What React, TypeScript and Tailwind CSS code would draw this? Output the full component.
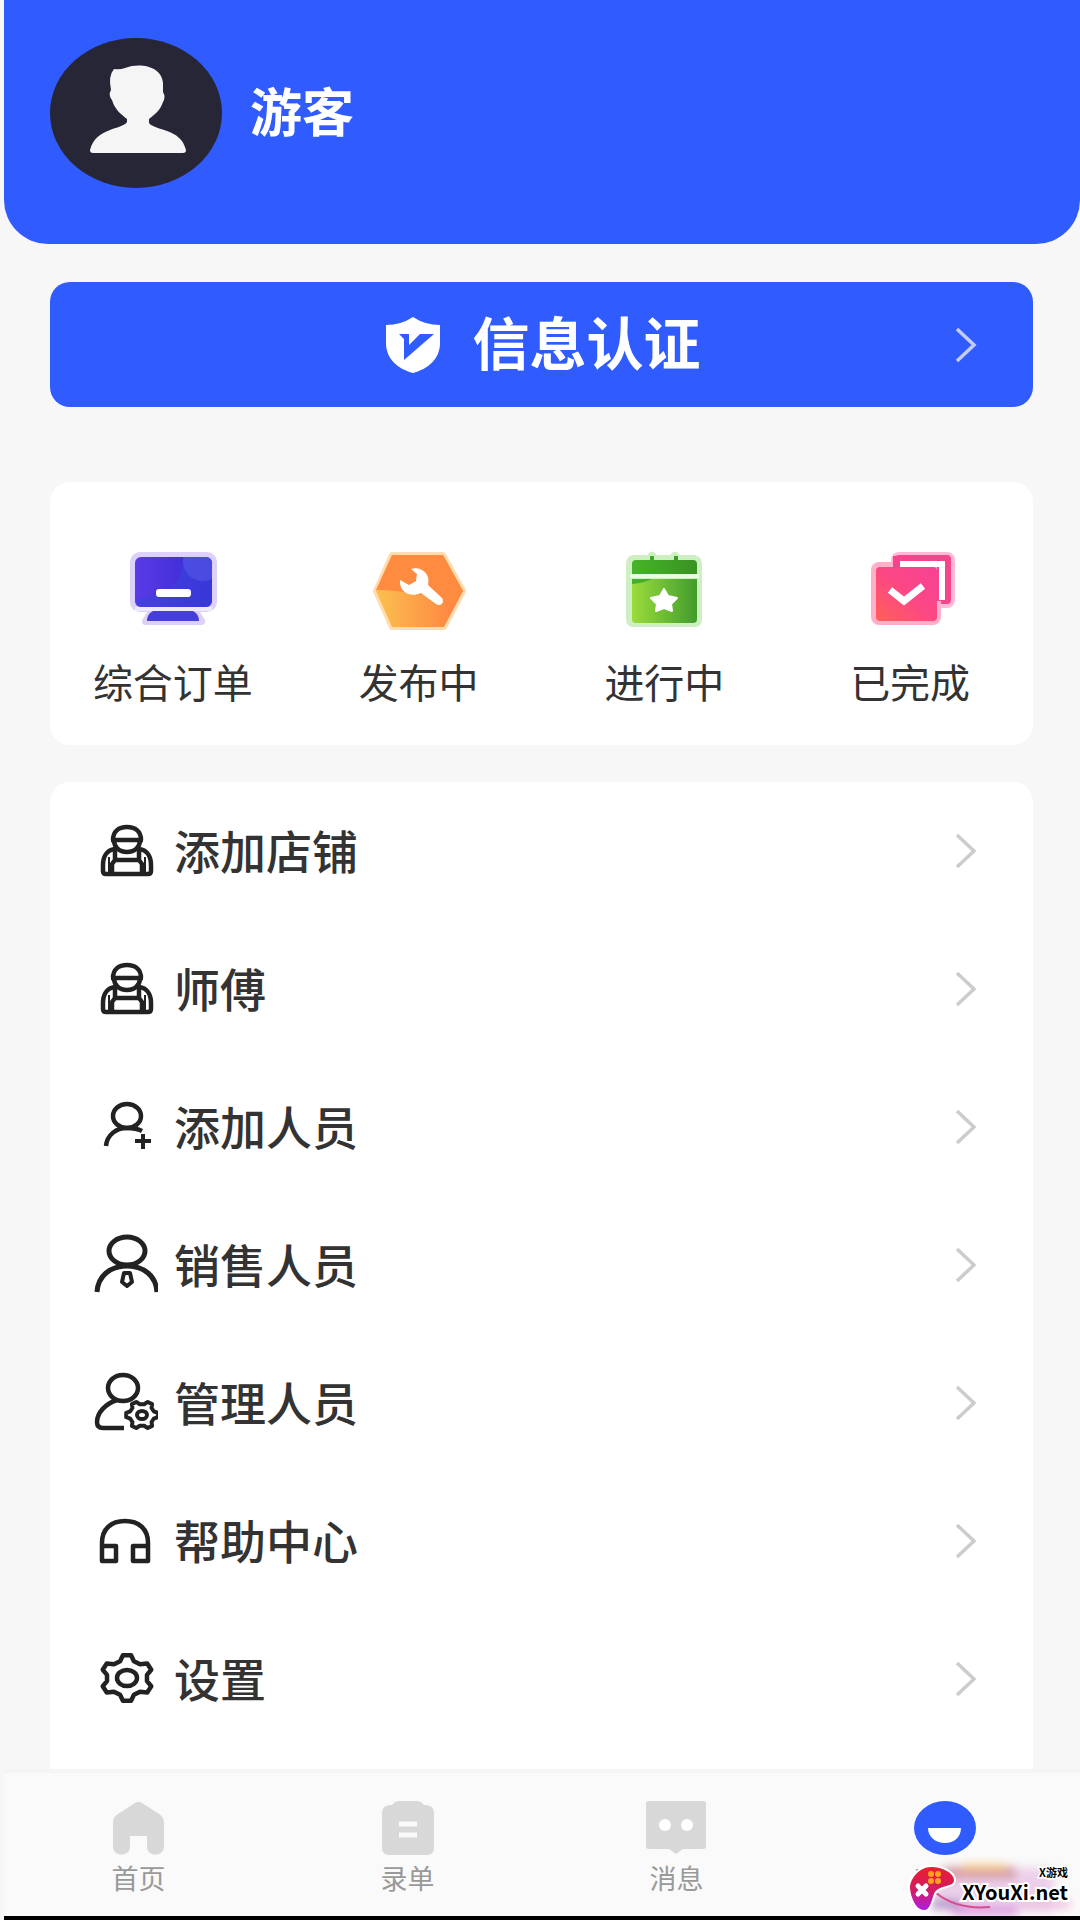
import type { ReactNode } from "react";

const BLUE = "#2f5bff";

// outline of a six-toothed cog, built round an ellipse
function cogPath(cx: number, cy: number, rx: number, ry: number, turn = 0) {
  const points: string[] = [];
  for (let i = 0; i < 6; i++) {
    const mid = turn + i * 60 - 90;
    for (const [offset, r] of [[-20, 0.78], [-9, 1], [9, 1], [20, 0.78]]) {
      const a = ((mid + offset) * Math.PI) / 180;
      points.push(`${(cx + Math.cos(a) * rx * r).toFixed(2)} ${(cy + Math.sin(a) * ry * r).toFixed(2)}`);
    }
  }
  return `M${points.join("L")}Z`;
}

function LineIcon({ children }: { children: ReactNode }) {
  return (
    <svg
      viewBox="0 0 64 64"
      className="size-16 shrink-0"
      fill="none"
      stroke="#222"
      strokeWidth="4.5"
      strokeLinejoin="round"
      aria-hidden="true"
    >
      {children}
    </svg>
  );
}

function WorkerIcon() {
  return (
    <LineIcon>
      <path d="M19 21C19 12 25 8 33 8s14 4 14 13M17 21h32M20 21c0 7 5 12 13 12s13-5 13-12" />
      <path d="M21 30C12 31 9 39 9 46v6c0 2 1 3 3 3h42c2 0 3-1 3-3v-6c0-7-3-15-12-16" />
      <path d="M21 29v12h24V29M21 41l-3 4v10M45 41l3 4v10" />
      <path d="M15 38v15M51 38v15" strokeWidth="2" />
    </LineIcon>
  );
}

function AddUserIcon() {
  return (
    <LineIcon>
      <ellipse cx="33" cy="21" rx="14" ry="12" />
      <path d="M12 51C13 40 22 33 33 33c6 0 11 1 15 3" />
      <path d="M49 39v15M41 46h16" strokeWidth="4" />
    </LineIcon>
  );
}

function SalesIcon() {
  return (
    <LineIcon>
      <g strokeWidth="5">
        <ellipse cx="33" cy="18" rx="18" ry="14" />
        <path d="M3 59C4 43 16 33 33 33s29 10 30 26" />
      </g>
      <path d="M30 40h6l2 9-5 4-5-4z" strokeWidth="4" />
    </LineIcon>
  );
}

function ManagerIcon() {
  return (
    <LineIcon>
      <ellipse cx="29" cy="17" rx="15" ry="13" />
      <path d="M23 29C11 33 3 42 3 51c0 4 2 6 6 6h21" />
      <path d={cogPath(48, 44, 16, 14, 30)} strokeWidth="4" />
      <ellipse cx="48" cy="44" rx="5" ry="4" strokeWidth="4" />
    </LineIcon>
  );
}

function HeadsetIcon() {
  return (
    <LineIcon>
      <path d="M8 52V34C8 20 17 12 31 12s23 8 23 22v18M8 37h14v15H8zM39 37h15v15H39z" />
    </LineIcon>
  );
}

function SettingsIcon() {
  return (
    <LineIcon>
      <path d={cogPath(33, 31, 26, 23)} />
      <ellipse cx="33" cy="31" rx="10" ry="8" />
    </LineIcon>
  );
}

function Chevron({ color }: { color: string }) {
  return (
    <svg viewBox="0 0 22 38" className="h-[38px] w-[22px] shrink-0" fill="none" stroke={color} strokeWidth="3.5" aria-hidden="true">
      <path d="M2 3l17 16L2 35" />
    </svg>
  );
}

function MonitorIcon() {
  return (
    <svg viewBox="0 0 96 84" className="h-[84px] w-24" aria-hidden="true">
      <defs>
        <linearGradient id="monitor" x1="0" x2="1">
          <stop offset="0" stopColor="#5a3be6" />
          <stop offset="1" stopColor="#3328d2" />
        </linearGradient>
        <clipPath id="screen">
          <rect x="10" y="10" width="77" height="50" rx="6" />
        </clipPath>
      </defs>
      <g fill="#ddd0fa">
        <rect x="5" y="5" width="87" height="60" rx="10" />
        <path d="M26 60h46l8 13q1 5-4 5H21q-5 0-4-5z" />
      </g>
      <rect x="10" y="10" width="77" height="50" rx="6" fill="url(#monitor)" />
      <g clipPath="url(#screen)">
        <path d="M58 8c0 22-8 32-18 39L10 52v10h80V8z" fill="#3a45dc" opacity=".55" />
        <circle cx="78" cy="14" r="20" fill="#5558e6" opacity=".6" />
      </g>
      <path d="M28 64h40q6 3 6 10H22q0-7 6-10z" fill="#453edb" />
      <path d="M10 62h77" stroke="#efe9fd" strokeWidth="4" />
      <rect x="31" y="42" width="35" height="8" rx="3" fill="#fff" />
    </svg>
  );
}

function WrenchIcon() {
  return (
    <svg viewBox="0 0 96 84" className="h-[84px] w-24" aria-hidden="true">
      <defs>
        <linearGradient id="hexLow" x1="0" x2="1">
          <stop offset="0" stopColor="#fbc04f" />
          <stop offset="1" stopColor="#ff7f40" />
        </linearGradient>
      </defs>
      <path d="M5 44L21 8h51l20 36-19 36H21z" fill="#ffdcae" stroke="#ffdcae" strokeWidth="6" strokeLinejoin="round" />
      <path d="M5 44L21 8h51l20 36-19 36H21z" fill="url(#hexLow)" />
      <path d="M5 43L21 8h51l20 36-9 14q-14-16-34-10-22-5-44-5z" fill="#ff8b40" />
      <path d="M29 33l9 5 7-4 1-7-6-5c10-3 20 5 17 16l14 13c3 5-2 9-6 6L50 46C39 51 28 45 29 33z" fill="#fff" />
    </svg>
  );
}

function CalendarIcon() {
  return (
    <svg viewBox="0 0 96 84" className="h-[84px] w-24" aria-hidden="true">
      <defs>
        <linearGradient id="calTop" x1="0" x2="1">
          <stop offset="0" stopColor="#45b527" />
          <stop offset="1" stopColor="#399223" />
        </linearGradient>
        <linearGradient id="calBody" x1="0" x2="1">
          <stop offset="0" stopColor="#9bdc3d" />
          <stop offset="1" stopColor="#419c2c" />
        </linearGradient>
      </defs>
      <path d="M17 8h14q5-7 10 0h13q5-7 10 0h14q8 1 8 9v55q0 8-8 8H18q-8 0-8-8V17q0-8 7-9z" fill="#cdefc2" />
      <path d="M20 13h14V9h4v4h20V9h4v4h15q4 0 4 4v10H16V17q0-4 4-4z" fill="url(#calTop)" />
      <path d="M16 32h65v40q0 4-4 4H20q-4 0-4-4z" fill="url(#calBody)" />
      <path d="M16 32h20q-8 4-20 5z" fill="#42b02a" />
      <path d="M14 29h69" stroke="#eafbe4" strokeWidth="4" />
      <path d="M48 42l4 7 9 2-6 6 1 7-8-3-8 3 1-7-6-6 9-2z" fill="#fff" stroke="#fff" strokeWidth="2" strokeLinejoin="round" />
    </svg>
  );
}

function DoneIcon() {
  return (
    <svg viewBox="0 0 96 84" className="h-[84px] w-24" aria-hidden="true">
      <defs>
        <linearGradient id="done" x1="0" y1="1" x2="1" y2="0">
          <stop offset="0" stopColor="#ff6058" />
          <stop offset=".5" stopColor="#fb4884" />
          <stop offset="1" stopColor="#f74195" />
        </linearGradient>
      </defs>
      <rect x="29" y="5" width="64" height="56" rx="8" fill="#ffb9d4" />
      <rect x="33" y="8" width="56" height="49" rx="4" fill="#f6458d" />
      <rect x="9" y="15" width="70" height="63" rx="8" fill="#ffb0c8" />
      <path d="M31 20V9h52v45h-8V20z" fill="#f6458d" />
      <rect x="14" y="20" width="61" height="54" rx="4" fill="url(#done)" />
      <path d="M38 17h42v36" fill="none" stroke="#fff" strokeWidth="6" />
      <path d="M28 43l14 11 19-15" fill="none" stroke="#fff" strokeWidth="7" />
    </svg>
  );
}

function HomeTabIcon() {
  return (
    <svg viewBox="0 0 64 56" className="h-14 w-16" fill="#d8d8d8" aria-hidden="true">
      <path d="M28 3q3-2 7 0l17 11q5 3 5 9v24c0 10-17 10-17 0V36H23v11c0 10-17 10-17 0V23q0-6 5-9z" />
    </svg>
  );
}

function OrderTabIcon() {
  return (
    <svg viewBox="0 0 64 56" className="h-14 w-16" aria-hidden="true">
      <path d="M23 1h18q4 0 7 4h3q7 1 7 8v35q0 7-7 7H13q-7 0-7-7V13q0-7 7-8h3q3-4 7-4z" fill="#d8d8d8" />
      <path d="M23 24h18M23 35h18" stroke="#fafafa" strokeWidth="5" />
    </svg>
  );
}

function MessageTabIcon() {
  return (
    <svg viewBox="0 0 64 56" className="h-14 w-16" aria-hidden="true">
      <path d="M4 1h54q3 0 3 3v42q0 3-3 3H38l-7 5-7-5H4q-3 0-3-3V4q0-3 3-3z" fill="#d8d8d8" />
      <circle cx="20" cy="25" r="6" fill="#fff" />
      <circle cx="42" cy="25" r="6" fill="#fff" />
    </svg>
  );
}

function MineTabIcon() {
  return (
    <svg viewBox="0 0 64 56" className="h-14 w-16" aria-hidden="true">
      <ellipse cx="31" cy="28" rx="31" ry="27" fill={BLUE} />
      <path d="M14 28h33c0 9-7 15-16 15s-17-6-17-15z" fill="#fff" />
    </svg>
  );
}

const orders = [
  { label: "综合订单", icon: <MonitorIcon /> },
  { label: "发布中", icon: <WrenchIcon /> },
  { label: "进行中", icon: <CalendarIcon /> },
  { label: "已完成", icon: <DoneIcon /> },
];

const menu = [
  { label: "添加店铺", icon: <WorkerIcon /> },
  { label: "师傅", icon: <WorkerIcon /> },
  { label: "添加人员", icon: <AddUserIcon /> },
  { label: "销售人员", icon: <SalesIcon /> },
  { label: "管理人员", icon: <ManagerIcon /> },
  { label: "帮助中心", icon: <HeadsetIcon /> },
  { label: "设置", icon: <SettingsIcon /> },
];

const tabs = [
  { label: "首页", icon: <HomeTabIcon /> },
  { label: "录单", icon: <OrderTabIcon /> },
  { label: "消息", icon: <MessageTabIcon /> },
];

function SiteBadge() {
  return (
    <div className="pointer-events-none absolute right-0 bottom-0 flex h-[60px] w-[176px] items-center">
      <svg viewBox="0 0 176 60" className="absolute inset-0 size-full" aria-hidden="true">
        <defs>
          <filter id="haze" x="-20%" y="-40%" width="140%" height="180%">
            <feGaussianBlur stdDeviation="5" />
          </filter>
          <linearGradient id="pad" x1="0" y1="0" x2="0" y2="1">
            <stop offset="0" stopColor="#e81f2e" />
            <stop offset=".5" stopColor="#d51c5c" />
            <stop offset="1" stopColor="#b01ee0" />
          </linearGradient>
        </defs>
        <g filter="url(#haze)">
          <rect x="30" y="12" width="120" height="44" fill="#ecd0ea" />
          <rect x="40" y="11" width="72" height="12" fill="#d49aa6" />
          <rect x="58" y="8" width="44" height="7" fill="#f4c789" />
          <rect x="28" y="44" width="30" height="8" fill="#a98cc4" />
          <rect x="48" y="50" width="66" height="10" fill="#dd9ee0" />
          <rect x="120" y="44" width="46" height="8" fill="#efbfdf" />
        </g>
        <path d="M12 14h6" stroke="#aaa" strokeWidth="2" />
        <path d="M32 37c14 11 32 16 54 14" fill="none" stroke="#d94a8e" strokeWidth="2" />
        <path
          d="M27 11C38 11 50 17 50 24C50 32 34 28 30 38C27 46 26 54 20 54C12 54 7 42 6 32C6 22 16 11 27 11Z"
          fill="url(#pad)"
          stroke="#fff"
          strokeWidth="4"
          paintOrder="stroke"
        />
        <path d="M14 30l8 8M22 30l-8 8" stroke="#fff" strokeWidth="5" strokeLinecap="round" />
        <g fill="#ffa31a">
          <circle cx="27" cy="18" r="3" />
          <circle cx="34" cy="18" r="3" />
          <circle cx="27" cy="25" r="3" />
          <circle cx="34" cy="25" r="3" />
        </g>
      </svg>
      <div className="relative ml-auto flex flex-col items-end pr-3 pb-1 font-bold text-black">
        <span className="text-[11px] leading-4 [-webkit-text-stroke:3px_white] [paint-order:stroke_fill]">X游戏</span>
        <span className="text-[20px] leading-6 [-webkit-text-stroke:4px_white] [paint-order:stroke_fill]">XYouXi.net</span>
      </div>
    </div>
  );
}

export default function App() {
  return (
    <div className="flex min-h-screen flex-col bg-[#f7f7f7] pl-1 font-['Noto_Sans_CJK_SC',sans-serif] text-[#333]">
      <header className="flex h-[244px] items-start rounded-b-[44px] bg-[#2f5bff] pt-[38px] pl-[46px]">
        <div className="flex h-[150px] items-center gap-7">
          <svg viewBox="0 0 172 150" className="h-[150px] w-[172px]" aria-hidden="true">
            <ellipse cx="86" cy="75" rx="86" ry="75" fill="#272636" />
            <path
              d="M64 31q6 1 11-1c16-6 37-1 38 15v9q3 5 0 10c-3 9-8 12-14 17v4c6 8 32 5 37 27 0 2-1 3-3 3H43q-3 0-3-3c6-23 32-20 37-28v-3c-6-5-12-9-15-19q-4-5-1-10-3-14 3-21z"
              fill="#f5f5f5"
            />
          </svg>
          <h1 className="pb-1.5 text-[52px] leading-none font-bold text-white">游客</h1>
        </div>
      </header>

      <main className="flex flex-1 flex-col pt-[38px] pr-[47px] pl-[46px]">
        <button type="button" className="flex h-[125px] items-center rounded-[20px] bg-[#2f5bff] px-14 text-white">
          <span className="flex-1" />
          <span className="flex items-center gap-[30px]">
            <svg viewBox="0 0 60 60" className="size-[60px]" aria-hidden="true">
              <path d="M30 2q12 8 27 8v18c0 16-12 26-27 30C15 54 3 44 3 28V10Q18 10 30 2z" fill="#fff" />
              <path d="M16 19h10v11l11-11h14L21 45V24z" fill={BLUE} />
            </svg>
            <span className="pb-2 text-[57px] leading-none font-bold">信息认证</span>
          </span>
          <span className="flex flex-1 justify-end">
            <Chevron color="#c3cdf5" />
          </span>
        </button>

        <section className="mt-[75px] grid grid-cols-4 rounded-[20px] bg-white pt-[65px] pb-[42px]">
          {orders.map(o => (
            <a key={o.label} href="#" className="flex flex-col items-center gap-7">
              {o.icon}
              <span className="text-[40px] leading-[44px]">{o.label}</span>
            </a>
          ))}
        </section>

        <nav className="mt-[37px] flex-1 rounded-t-[20px] bg-white">
          {menu.map(m => (
            <a key={m.label} href="#" className="flex h-[138px] items-center gap-4 pr-14 pl-11">
              {m.icon}
              <span className="flex-1 pb-1 text-[46px] leading-none font-medium">{m.label}</span>
              <Chevron color="#ccc" />
            </a>
          ))}
        </nav>
      </main>

      <footer className="relative border-t-4 border-b-4 border-t-[#f5f5f5] border-b-black bg-[#fafafa]">
        <nav className="grid grid-cols-4 pt-[27px] pb-5">
          {tabs.map(t => (
            <a key={t.label} href="#" className="flex flex-col items-center gap-1 text-[#999]">
              {t.icon}
              <span className="text-[27px] leading-9">{t.label}</span>
            </a>
          ))}
          <a href="#" aria-label="我的" aria-current="page" className="flex flex-col items-center">
            <MineTabIcon />
          </a>
        </nav>
        <SiteBadge />
      </footer>
    </div>
  );
}
